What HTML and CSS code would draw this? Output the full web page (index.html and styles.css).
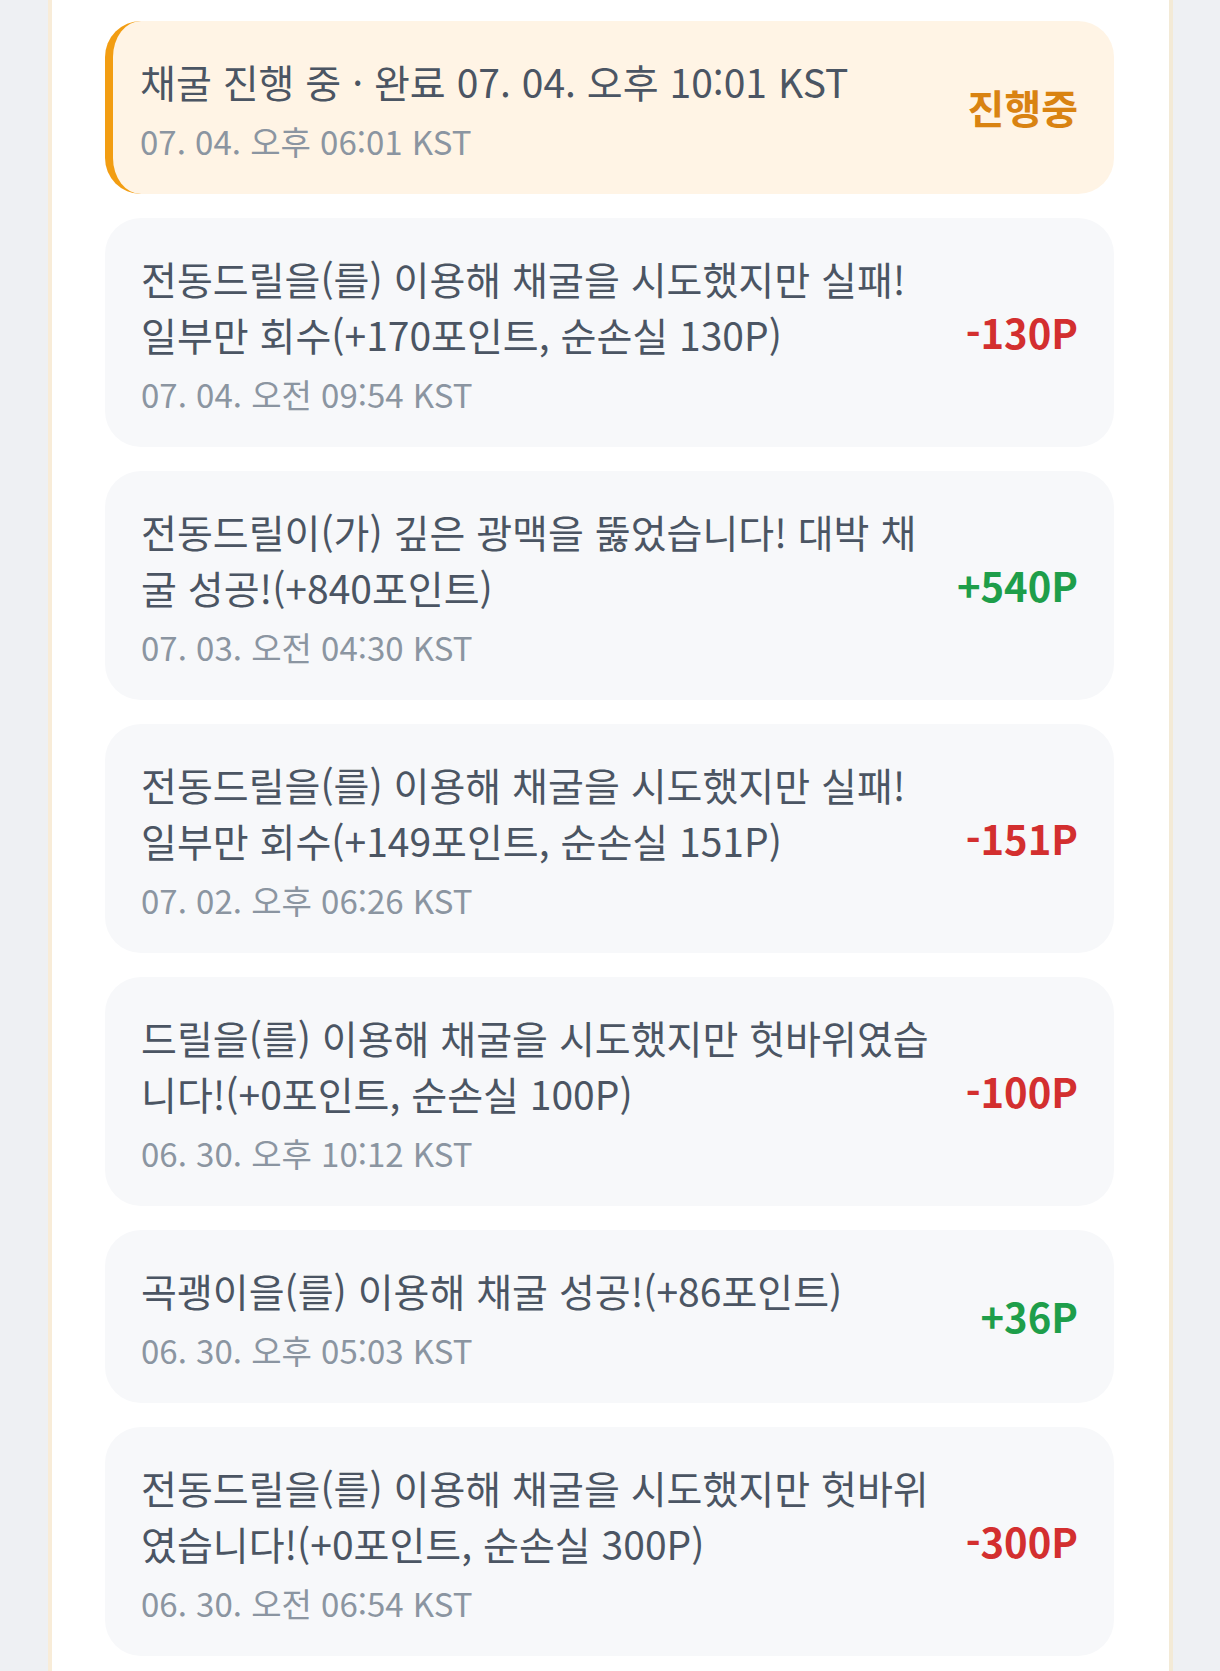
FILE: index.html
```html
<!DOCTYPE html>
<html lang="ko">
<head>
    <meta charset="UTF-8">
    <meta name="viewport" content="width=device-width, initial-scale=1.0">
    <title>채굴 기록</title>
    <link rel="stylesheet" href="styles.css">
</head>
<body>
    <main class="panel">
        <ul class="historial">
            <!-- Registro en curso -->
            <li class="registro en-curso">
                <div class="info">
                    <p class="mensaje">채굴 진행 중 · 완료 07. 04. 오후 10:01 KST</p>
                    <p class="fecha">07. 04. 오후 06:01 KST</p>
                </div>
                <span class="estado">진행중</span>
            </li>
            <li class="registro">
                <div class="info">
                    <p class="mensaje">전동드릴을(를) 이용해 채굴을 시도했지만 실패! 일부만 회수(+170포인트, 순손실 130P)</p>
                    <p class="fecha">07. 04. 오전 09:54 KST</p>
                </div>
                <span class="monto negativo">-130P</span>
            </li>
            <li class="registro">
                <div class="info">
                    <p class="mensaje">전동드릴이(가) 깊은 광맥을 뚫었습니다! 대박 채굴 성공!(+840포인트)</p>
                    <p class="fecha">07. 03. 오전 04:30 KST</p>
                </div>
                <span class="monto positivo">+540P</span>
            </li>
            <li class="registro">
                <div class="info">
                    <p class="mensaje">전동드릴을(를) 이용해 채굴을 시도했지만 실패! 일부만 회수(+149포인트, 순손실 151P)</p>
                    <p class="fecha">07. 02. 오후 06:26 KST</p>
                </div>
                <span class="monto negativo">-151P</span>
            </li>
            <li class="registro">
                <div class="info">
                    <p class="mensaje">드릴을(를) 이용해 채굴을 시도했지만 헛바위였습니다!(+0포인트, 순손실 100P)</p>
                    <p class="fecha">06. 30. 오후 10:12 KST</p>
                </div>
                <span class="monto negativo">-100P</span>
            </li>
            <li class="registro">
                <div class="info">
                    <p class="mensaje">곡괭이을(를) 이용해 채굴 성공!(+86포인트)</p>
                    <p class="fecha">06. 30. 오후 05:03 KST</p>
                </div>
                <span class="monto positivo">+36P</span>
            </li>
            <li class="registro">
                <div class="info">
                    <p class="mensaje">전동드릴을(를) 이용해 채굴을 시도했지만 헛바위였습니다!(+0포인트, 순손실 300P)</p>
                    <p class="fecha">06. 30. 오전 06:54 KST</p>
                </div>
                <span class="monto negativo">-300P</span>
            </li>
        </ul>
    </main>
</body>
</html>
```

FILE: styles.css
```css
body {
    font-family: "Noto Sans CJK KR", "Noto Sans", sans-serif;
    margin: 0;
    padding: 0;
    background: #eef0f3;
}

.panel {
    width: 1125px;
    min-height: 100vh;
    margin-left: 48px;
    background: #fff;
    border-left: 4px solid #f8ecd8;
    border-right: 4px solid #f3ead6;
    padding: 21px 55px 30px 53px;
    box-sizing: border-box;
}

.historial {
    list-style-type: none;
    margin: 0;
    padding: 0;
    display: flex;
    flex-direction: column;
    gap: 24px;
}

.registro {
    display: flex;
    align-items: center;
    gap: 24px;
    background: #f7f8fa;
    border-radius: 36px;
    padding: 32px 36px 33px 36px;
}

.info {
    flex: 1;
    min-width: 0;
}

.mensaje {
    margin: 0;
    font-size: 39px;
    line-height: 56px;
    color: #4b5563;
}

.fecha {
    margin: 12px 0 0;
    font-size: 33px;
    line-height: 40px;
    color: #8b95a1;
}

.monto,
.estado {
    flex-shrink: 0;
    font-weight: bold;
    font-size: 40px;
}

.negativo {
    color: #d32f2f;
}

.positivo {
    color: #1e9e4a;
}

/* Registro en curso */
.registro.en-curso {
    background: #fff4e5;
    border-left: 8px solid #f29d12;
    padding-left: 27px;
}

.estado {
    color: #d98312;
}
```
